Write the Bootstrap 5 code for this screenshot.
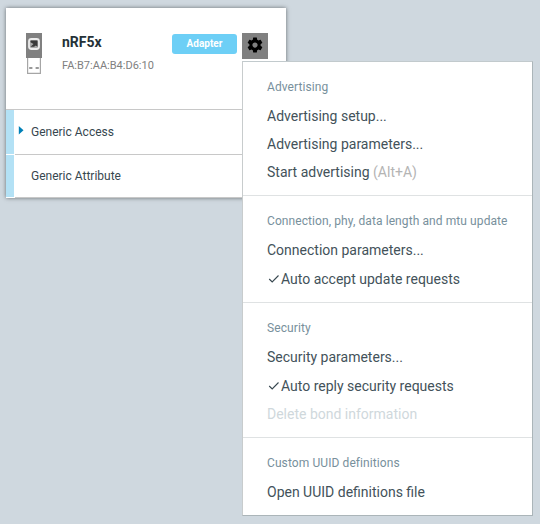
<!DOCTYPE html>
<html lang="en">
<head>
<meta charset="utf-8">
<meta name="viewport" content="width=device-width, initial-scale=1">
<title>nRF5x adapter</title>
<link rel="stylesheet" href="https://cdn.jsdelivr.net/npm/bootstrap@5.3.0/dist/css/bootstrap.min.css">
<style>
body{background:#cfd8df;font-family:Roboto,"Liberation Sans",sans-serif;color:#37474f;height:524px;overflow:hidden;padding:8px 0 0 6px}
.device{width:280px;height:190px;border:0;border-radius:0;box-shadow:0 0 4px rgba(0,0,0,.5)}
.device-head{height:102px;border-bottom:1px solid #c8c8c8;padding:25px 18px 0 20px}
.usb{width:16px;height:41px;margin-right:20px}
.device-name{font-size:14px;line-height:18px;font-weight:700;color:#263238}
.address{font-size:11px;line-height:14px;color:#808080;margin-top:8px}
.role{width:65px;height:20px;border-radius:3px;background:#6dcff6;font-size:10px;font-weight:700;margin:1px 5px 0 0;padding:0}
.gear-btn{width:26px;height:26px;border:0;border-radius:0;background:#808080;padding:0 0 2px}
.service{height:45px;font-size:12px;color:#37474f}
.service + .service{height:43px}
.service-bar{width:8px;margin:0 1px 1px 0;background:#b3e1f5}
.service-body{border-bottom:1px solid #c8c8c8;padding-left:3px}
.marker{width:6px;height:10px;margin:-3px 7px 0 0}
.options{display:block;top:53px;left:236px;width:291px;height:455px;border:1px solid #b0bec5;border-color:#c2cacd #abb5b9 #abb5b9 #c8cccd;border-radius:0;padding:0;z-index:5}
.options .dropdown-header{height:40px;padding:16px 24px 0;font-size:12px;font-weight:400;letter-spacing:.09px;line-height:18px;color:#78909c}
.options .dropdown-item{height:28px;padding:0 24px;font-size:14px;line-height:28px;color:#43525a}
.options .checked-item{height:29px;line-height:28px;padding-top:1px}
.options .dropdown-item.disabled{color:#cfd8dc}
.options .dropdown-divider{margin:9px 0 0;border-top:1px solid #dfe2e3;opacity:1}
.options .hint{color:#b4b4b4}
.tick{width:14px;height:14px}
</style>
<script defer src="https://cdn.jsdelivr.net/npm/bootstrap@5.3.0/dist/js/bootstrap.bundle.min.js"></script>
</head>
<body>
<main class="card device position-relative">
  <div class="device-head d-flex align-items-start">
    <svg class="usb flex-shrink-0" viewBox="0 0 16 41" aria-hidden="true">
      <path fill="#808080" d="M0 0h16v25H0z"/>
      <rect x="3" y="6" width="10" height="10" rx="2.5" fill="#a8a8a8" stroke="#ececec" stroke-width="1.8"/>
      <path fill="#383838" d="M4.5 7.5h7v6.3L9.8 12.6 8 13.8H4.5L7.5 11 4.5 9.3z"/>
      <path fill="#fff" stroke="#a6a6a6" stroke-width="1.2" d="M1.6 25v15.3h12.8V25"/>
      <path fill="#999" d="M3.2 34h3.2v2H3.2zm6.4 0h3.2v2H9.6z"/>
    </svg>
    <div class="flex-grow-1">
      <div class="device-name">nRF5x</div>
      <div class="address">FA:B7:AA:B4:D6:10</div>
    </div>
    <span class="badge role d-flex align-items-center justify-content-center">Adapter</span>
    <button class="btn gear-btn d-flex align-items-center justify-content-center" aria-label="Options">
      <svg width="18" height="18" viewBox="0 0 24 24"><path d="M19.43 12.98c.04-.32.07-.64.07-.98s-.03-.66-.07-.98l2.11-1.65c.19-.15.24-.42.12-.64l-2-3.46c-.12-.22-.39-.3-.61-.22l-2.49 1c-.52-.4-1.08-.73-1.69-.98l-.38-2.65C14.46 2.18 14.25 2 14 2h-4c-.25 0-.46.18-.49.42l-.38 2.65c-.61.25-1.17.59-1.69.98l-2.49-1c-.23-.09-.49 0-.61.22l-2 3.46c-.13.22-.07.49.12.64l2.11 1.65c-.04.32-.07.65-.07.98s.03.66.07.98l-2.11 1.65c-.19.15-.24.42-.12.64l2 3.46c.12.22.39.3.61.22l2.49-1c.52.4 1.08.73 1.69.98l.38 2.65c.03.24.24.42.49.42h4c.25 0 .46-.18.49-.42l.38-2.65c.61-.25 1.17-.59 1.69-.98l2.49 1c.23.09.49 0 .61-.22l2-3.46c.12-.22.07-.49-.12-.64l-2.11-1.65zM12 15.5c-1.93 0-3.5-1.57-3.5-3.5s1.57-3.5 3.5-3.5 3.5 1.57 3.5 3.5-1.57 3.5-3.5 3.5z"/></svg>
    </button>
  </div>
  <div class="service d-flex">
    <div class="service-bar"></div>
    <div class="service-body flex-grow-1 d-flex align-items-center">
      <svg class="marker" viewBox="0 0 6 10"><path fill="#0080b7" d="M.8 0l4.7 4.2L.8 8.4z"/></svg>
      <span>Generic Access</span>
    </div>
  </div>
  <div class="service d-flex">
    <div class="service-bar"></div>
    <div class="service-body flex-grow-1 d-flex align-items-center">
      <span class="marker"></span>
      <span>Generic Attribute</span>
    </div>
  </div>

  <ul class="dropdown-menu options">
    <li><h6 class="dropdown-header">Advertising</h6></li>
    <li><a class="dropdown-item" href="#">Advertising setup...</a></li>
    <li><a class="dropdown-item" href="#">Advertising parameters...</a></li>
    <li><a class="dropdown-item" href="#">Start advertising <span class="hint">(Alt+A)</span></a></li>
    <li><hr class="dropdown-divider"></li>
    <li><h6 class="dropdown-header">Connection, phy, data length and mtu update</h6></li>
    <li><a class="dropdown-item" href="#">Connection parameters...</a></li>
    <li><a class="dropdown-item checked-item d-flex align-items-center" href="#"><svg class="tick" viewBox="0 0 14 14"><path d="M2.2 7l3 3L11.5 3.5" fill="none" stroke="#37474f" stroke-width="1.1"/></svg>Auto accept update requests</a></li>
    <li><hr class="dropdown-divider"></li>
    <li><h6 class="dropdown-header">Security</h6></li>
    <li><a class="dropdown-item" href="#">Security parameters...</a></li>
    <li><a class="dropdown-item checked-item d-flex align-items-center" href="#"><svg class="tick" viewBox="0 0 14 14"><path d="M2.2 7l3 3L11.5 3.5" fill="none" stroke="#37474f" stroke-width="1.1"/></svg>Auto reply security requests</a></li>
    <li><a class="dropdown-item disabled" aria-disabled="true">Delete bond information</a></li>
    <li><hr class="dropdown-divider"></li>
    <li><h6 class="dropdown-header">Custom UUID definitions</h6></li>
    <li><a class="dropdown-item" href="#">Open UUID definitions file</a></li>
  </ul>
</main>
</body>
</html>
